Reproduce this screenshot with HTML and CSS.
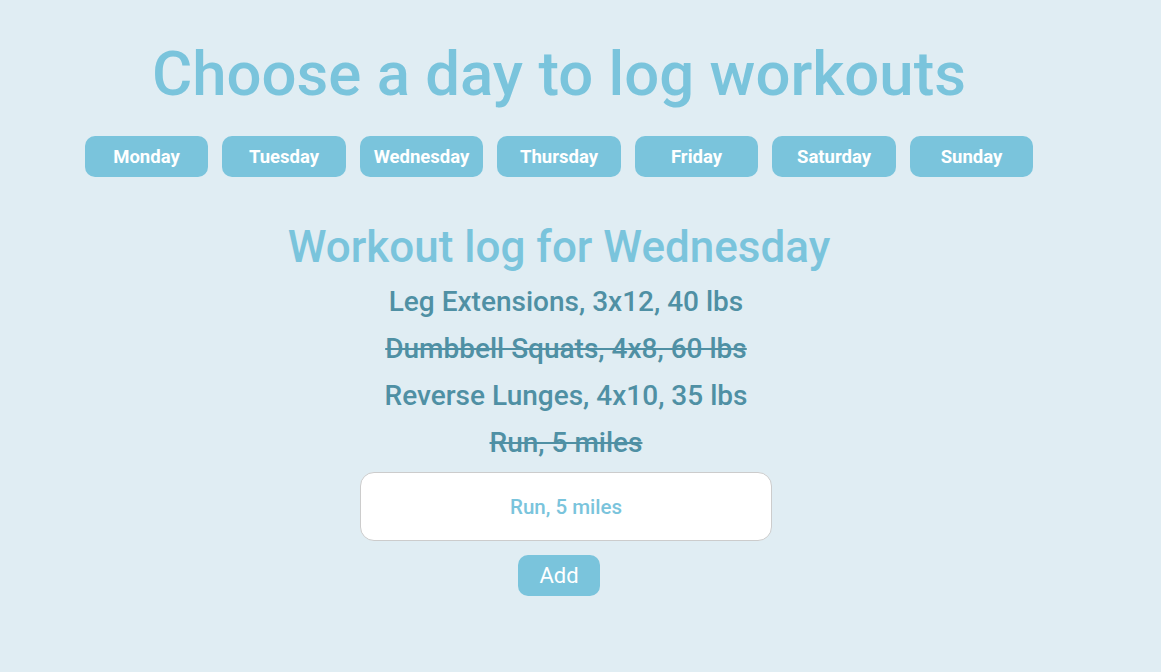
FILE: index.html
```html
<!DOCTYPE html>
<html>
<head>
<meta charset="utf-8">
<link rel="stylesheet" href="styles.css">
</head>
<body>
<div class="app">
  <h1 class="title">Choose a day to log workouts</h1>
  <div class="days">
    <button class="day">Monday</button>
    <button class="day">Tuesday</button>
    <button class="day">Wednesday</button>
    <button class="day">Thursday</button>
    <button class="day">Friday</button>
    <button class="day">Saturday</button>
    <button class="day">Sunday</button>
  </div>
  <h2 class="subtitle">Workout log for Wednesday</h2>
  <ul class="log">
    <li class="item">Leg Extensions, 3x12, 40 lbs</li>
    <li class="item done">Dumbbell Squats, 4x8, 60 lbs</li>
    <li class="item">Reverse Lunges, 4x10, 35 lbs</li>
    <li class="item done">Run, 5 miles</li>
  </ul>
  <input class="entry" type="text" value="Run, 5 miles">
  <button class="add">Add</button>
</div>
</body>
</html>
```
FILE: styles.css
```css
html, body {
  margin: 0;
  padding: 0;
  background: #e0edf3;
  font-family: Roboto, "Liberation Sans", sans-serif;
}
.app {
  width: 1118px;
  display: flex;
  flex-direction: column;
  align-items: center;
  padding-top: 37px;
}
.title {
  margin: 0;
  font-size: 61.7px;
  font-weight: 500;
  color: #7ac4dc;
  line-height: 75px;
}
.days {
  display: flex;
  gap: 14px;
  margin-top: 24px;
}
.day {
  width: 123.5px;
  height: 41px;
  border: none;
  border-radius: 10px;
  background: #7ac4dc;
  color: #fff;
  font-family: Roboto, "Liberation Sans", sans-serif;
  font-weight: 700;
  font-size: 18.5px;
  padding: 0;
}
.subtitle {
  margin: 44px 0 0;
  font-size: 44px;
  font-weight: 500;
  color: #7ac4dc;
  line-height: 52px;
}
.log {
  list-style: none;
  margin: 5px 0 0 14px;
  padding: 0;
  text-align: center;
}
.item {
  font-size: 28px;
  font-weight: 500;
  color: #4f90a4;
  line-height: 47px;
}
.done {
  text-decoration: line-through;
}
.entry {
  margin: 6px 0 0 14px;
  width: 412px;
  height: 69px;
  box-sizing: border-box;
  border: 1px solid #cccccc;
  border-radius: 14px;
  background: #fff;
  text-align: center;
  font-family: Roboto, "Liberation Sans", sans-serif;
  font-size: 20.5px;
  font-weight: 500;
  color: #7ac4dc;
  outline: none;
}
.add {
  margin-top: 14px;
  width: 82px;
  height: 41px;
  border: none;
  border-radius: 10px;
  background: #7ac4dc;
  color: #fff;
  font-family: Roboto, "Liberation Sans", sans-serif;
  font-size: 22px;
  font-weight: 400;
  padding: 0;
}
```
